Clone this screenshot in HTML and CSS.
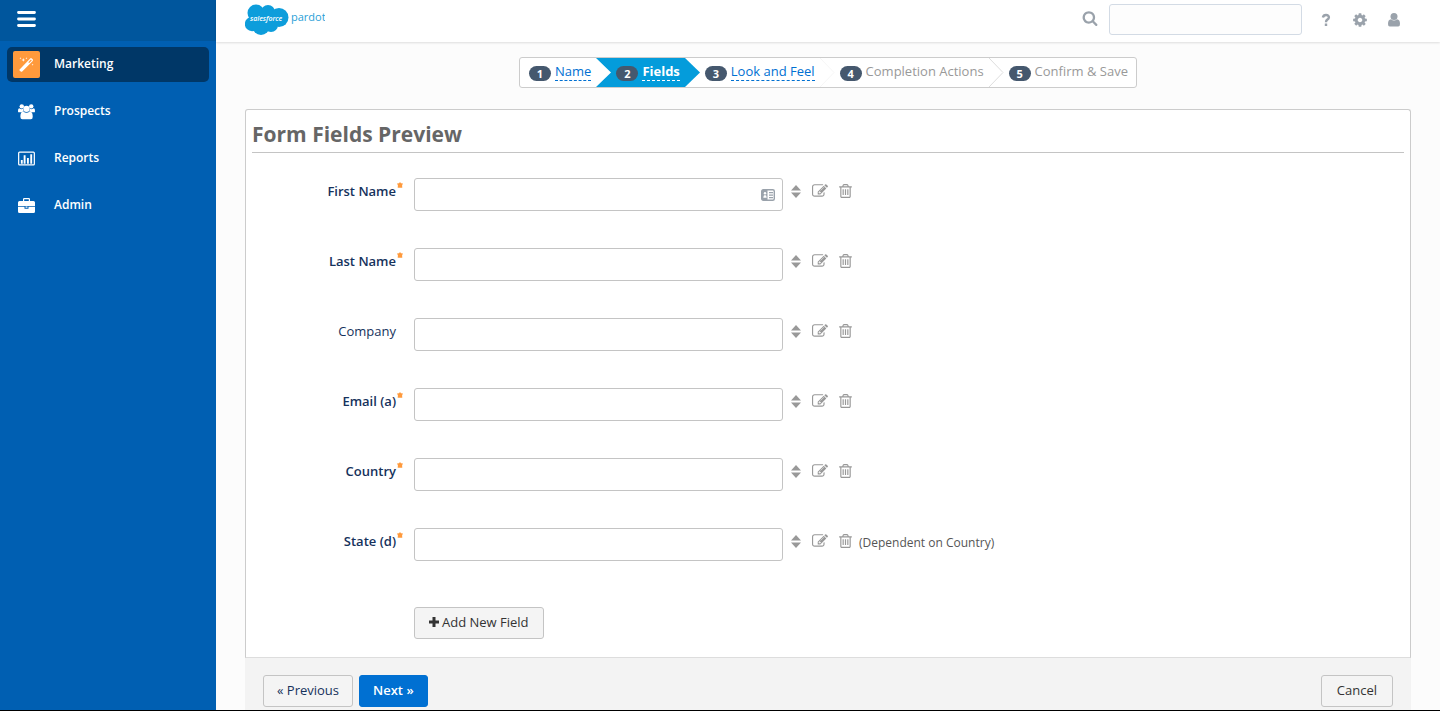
FILE: index.html
```html
<!DOCTYPE html>
<html lang="en">
<head>
    <meta charset="UTF-8">
    <meta name="viewport" content="width=device-width, initial-scale=1.0">
    <title>Form Fields - Pardot</title>
    <link rel="stylesheet" href="styles.css">
</head>
<body>

    <!-- Shared icons -->
    <svg class="sprite" aria-hidden="true">
        <symbol id="icon-sort" viewBox="0 0 10 13">
            <path d="M5 0l5 5.500H0zM5 13l5-5.500H0z"/>
        </symbol>
        <symbol id="icon-edit" viewBox="0 0 1792 1792">
            <path d="M888 1184l116-116-152-152-116 116v56h96v96h56zm440-720q-16-16-33 1l-350 350q-17 17-1 33t33-1l350-350q17-17 1-33zm80 594v190q0 119-84.5 203.5t-203.5 84.5h-832q-119 0-203.5-84.5t-84.5-203.5v-832q0-119 84.5-203.5t203.5-84.5h832q63 0 117 25 15 7 18 23 3 17-9 29l-49 49q-14 14-32 8-23-6-45-6h-832q-66 0-113 47t-47 113v832q0 66 47 113t113 47h832q66 0 113-47t47-113v-126q0-13 9-22l64-64q15-15 35-7t20 29zm-96-738l288 288-672 672h-288v-288zm444 132l-92 92-288-288 92-92q28-28 68-28t68 28l152 152q28 28 28 68t-28 68z"/>
        </symbol>
        <symbol id="icon-trash" viewBox="192 128 1408 1536">
            <path d="M704 736v576q0 14-9 23t-23 9h-64q-14 0-23-9t-9-23v-576q0-14 9-23t23-9h64q14 0 23 9t9 23zm256 0v576q0 14-9 23t-23 9h-64q-14 0-23-9t-9-23v-576q0-14 9-23t23-9h64q14 0 23 9t9 23zm256 0v576q0 14-9 23t-23 9h-64q-14 0-23-9t-9-23v-576q0-14 9-23t23-9h64q14 0 23 9t9 23zm128 724v-948h-896v948q0 22 7 40.5t14.5 27 10.5 8.5h832q3 0 10.5-8.5t14.5-27 7-40.5zm-672-1076h448l-48-117q-7-9-17-11h-317q-10 2-17 11zm928 32v64q0 14-9 23t-23 9h-96v948q0 83-47 143.5t-113 60.5h-832q-66 0-113-58.5t-47-141.5v-952h-96q-14 0-23-9t-9-23v-64q0-14 9-23t23-9h309l70-167q15-37 54-63t79-26h320q40 0 79 26t54 63l70 167h309q14 0 23 9t9 23z"/>
        </symbol>
        <symbol id="icon-star" viewBox="0 0 6 6">
            <path d="M3 0l1 1.300 2 .3-.9 1.700.2 2.500H.7l.2-2.500L0 1.600l2-.3z"/>
        </symbol>
    </svg>

    <!-- Sidebar -->
    <aside class="sidebar">
        <div class="sidebar-top">
            <button type="button" class="menu-btn" aria-label="Toggle menu">
                <svg width="19" height="16" viewBox="0 0 19 16"><path d="M1.500 1.500h16M1.500 8h16M1.500 14.500h16" stroke="#fff" stroke-width="2.800" stroke-linecap="round"/></svg>
            </button>
        </div>
        <nav class="nav">
            <a href="#" class="nav-item active">
                <span class="nav-icon">
                    <svg width="17" height="17" viewBox="0 0 17 17" fill="#fff">
                        <path fill-rule="evenodd" d="M1.600 13.400L12.200 2.400q.8-.7 1.600 0l.9.900q.7.800 0 1.600L4.200 15.400q-.7.700-1.500 0l-1.100-.9q-.6-.6 0-1.100zM10.300 6.200l.9.900 2.600-2.600-.9-.9z"/>
                        <path d="M5.300 2l.5 1.400 1.400.5-1.400.5-.5 1.400-.5-1.400-1.400-.5 1.400-.5zM2.400 1.200l.3.700.7.300-.7.300-.3.700-.3-.7-.7-.3.700-.3zM8.400 1.200l.3.700.7.300-.7.300-.3.700-.3-.7-.7-.3.700-.3zM14.600 7.600l.3.800.8.300-.8.300-.3.800-.3-.8-.8-.3.800-.3z"/>
                    </svg>
                </span>
                <span class="nav-text">Marketing</span>
            </a>
            <a href="#" class="nav-item">
                <span class="nav-icon">
                    <svg width="17" height="17" viewBox="0 0 18 17" fill="#fff">
                        <circle cx="4" cy="3" r="2.300"/>
                        <circle cx="14" cy="3" r="2.300"/>
                        <path d="M0 8.500Q0 5 1.700 5.200q2.200 1.500 3.500.4.100 1.800 1 2.600-1.400.2-2.200 1.200H1.500Q0 9.500 0 8.500zM18 8.500Q18 5 16.300 5.200q-2.200 1.500-3.500.4-.1 1.800-1 2.600 1.400.2 2.200 1.200h2.500q1.500.1 1.500-.9z"/>
                        <circle cx="9" cy="5.700" r="3.400"/>
                        <path d="M5.600 8.600Q9 11.300 12.400 8.600q3.200.2 3.200 5.400 0 2.800-2 2.800H4.600q-2.100 0-2.100-2.800 0-5.200 3.100-5.400z"/>
                    </svg>
                </span>
                <span class="nav-text">Prospects</span>
            </a>
            <a href="#" class="nav-item">
                <span class="nav-icon">
                    <svg width="17" height="15" viewBox="0 0 18 15">
                        <rect x=".7" y=".7" width="16.600" height="13.600" rx="1" fill="none" stroke="#fff" stroke-width="1.300"/>
                        <path d="M3 9h2v4H3zM6 4h2v9H6zM9.500 7h2v6h-2zM13 3h2v10h-2z" fill="#fff"/>
                    </svg>
                </span>
                <span class="nav-text">Reports</span>
            </a>
            <a href="#" class="nav-item">
                <span class="nav-icon">
                    <svg width="17" height="15" viewBox="0 0 17 15" fill="#fff">
                        <path fill-rule="evenodd" d="M5 3V1.200Q5 0 6.200 0h4.600Q12 0 12 1.200V3h3.500Q17 3 17 4.500V8H0V4.500Q0 3 1.500 3zM6.200 3h4.600V1.300H6.200z"/>
                        <path d="M0 8.700h6.500v2h4v-2H17v4.800q0 1.500-1.500 1.500h-14Q0 15 0 13.500zM7.500 8.500h2v1.200h-2z"/>
                    </svg>
                </span>
                <span class="nav-text">Admin</span>
            </a>
        </nav>
    </aside>

    <div class="page">

        <!-- Top bar -->
        <header class="topbar">
            <a href="#" class="logo" aria-label="salesforce pardot">
                <svg width="80" height="32" viewBox="0 0 80 32">
                    <g fill="#0d9ddb">
                        <circle cx="11" cy="9" r="8.500"/>
                        <circle cx="23" cy="8" r="7"/>
                        <circle cx="34" cy="13.500" r="9.500"/>
                        <circle cx="7" cy="20" r="7.200"/>
                        <circle cx="16" cy="22.500" r="8.500"/>
                        <circle cx="26" cy="21" r="7"/>
                        <path d="M8 8h26v14H8z"/>
                    </g>
                    <text x="5" y="17" class="logo-cloud">salesforce</text>
                    <text x="46" y="17" class="logo-name">pardot</text>
                </svg>
            </a>
            <form class="search">
                <label for="search" aria-label="Search">
                    <svg width="16" height="16" viewBox="0 0 1792 1792" fill="#9aa2ab"><path d="M1216 832q0-185-131.500-316.500t-316.500-131.500-316.500 131.500-131.500 316.500 131.500 316.500 316.500 131.500 316.500-131.500 131.500-316.500zm512 832q0 52-38 90t-90 38q-54 0-90-38l-343-342q-179 124-399 124-143 0-273.500-55.500t-225-150-150-225-55.500-273.500 55.500-273.500 150-225 225-150 273.500-55.500 273.500 55.500 225 150 150 225 55.500 273.500q0 220-124 399l343 343q37 37 37 90z"/></svg>
                </label>
                <input type="text" id="search">
            </form>
            <div class="tools">
                <button type="button" aria-label="Help">
                    <svg width="16" height="16" viewBox="0 0 16 16" fill="none" stroke="#9aa2ab" stroke-width="2.400"><path d="M4.900 5.500Q5.400 3 8 3q2.900 0 2.900 2.300 0 1.400-1.600 2.300Q8 8.300 8 10.200M8 11.500v2.500"/></svg>
                </button>
                <button type="button" aria-label="Settings">
                    <svg width="16" height="16" viewBox="0 0 1792 1792" fill="#9aa2ab"><path d="M1152 896q0-106-75-181t-181-75-181 75-75 181 75 181 181 75 181-75 75-181zm512-109v222q0 12-8 23t-20 13l-185 28q-19 54-39 91 35 50 107 138 10 12 10 25t-9 23q-27 37-99 108t-94 71q-12 0-26-9l-138-108q-44 23-91 38-16 136-29 186-7 28-36 28h-222q-14 0-24.500-8.500t-11.500-21.500l-28-184q-49-16-90-37l-141 107q-10 9-25 9-14 0-25-11-126-114-165-168-7-10-7-23 0-12 8-23 15-21 51-66.500t54-70.500q-27-50-41-99l-183-27q-13-2-21-12.500t-8-23.500v-222q0-12 8-23t19-13l186-28q14-46 39-92-40-57-107-138-10-12-10-24 0-10 9-23 26-36 98.500-107.500t94.500-71.500q13 0 26 10l138 107q44-23 91-38 16-136 29-186 7-28 36-28h222q14 0 24.500 8.500t11.500 21.500l28 184q49 16 90 37l142-107q9-9 24-9 13 0 25 10 129 119 165 170 7 8 7 22 0 12-8 23-15 21-51 66.500t-54 70.500q26 50 41 98l183 28q13 2 21 12.500t8 23.500z"/></svg>
                </button>
                <button type="button" aria-label="Account">
                    <svg width="16" height="16" viewBox="0 0 16 16" fill="#9aa2ab"><circle cx="8" cy="4.500" r="3.500"/><path d="M5 7.200q3 2.700 6 0 3 .3 3 4.800 0 2.500-1.800 2.500H3.800Q2 14.500 2 12q0-4.500 3-4.800z"/></svg>
                </button>
            </div>
        </header>

        <main class="content">

            <!-- Wizard steps -->
            <ol class="steps">
                <li class="step first"><span class="badge">1</span><a href="#">Name</a></li>
                <li class="arrow" aria-hidden="true">
                    <svg width="15" height="29" viewBox="0 0 15 29"><path d="M0 0h15v29H0l15-14.500z" fill="#049cdb"/></svg>
                </li>
                <li class="step current"><span class="badge">2</span><a href="#">Fields</a></li>
                <li class="arrow" aria-hidden="true">
                    <svg width="15" height="29" viewBox="0 0 15 29"><path d="M0 0l15 14.500L0 29z" fill="#049cdb"/></svg>
                </li>
                <li class="step"><span class="badge">3</span><a href="#">Look and Feel</a></li>
                <li class="arrow" aria-hidden="true">
                    <svg width="15" height="29" viewBox="0 0 15 29"><path d="M0 0l14 14.500L0 29" fill="none" stroke="#f6f6f6"/></svg>
                </li>
                <li class="step"><span class="badge">4</span><span>Completion Actions</span></li>
                <li class="arrow" aria-hidden="true">
                    <svg width="15" height="29" viewBox="0 0 15 29"><path d="M0 0l14 14.500L0 29" fill="none" stroke="#ddd"/></svg>
                </li>
                <li class="step last"><span class="badge">5</span><span>Confirm &amp; Save</span></li>
            </ol>

            <form class="wizard">
                <section class="card">
                    <h1>Form Fields Preview</h1>

                    <div class="field required">
                        <label for="first_name">First Name<svg class="star"><use href="#icon-star"/></svg></label>
                        <div class="input-wrap">
                            <input type="text" id="first_name">
                            <svg class="autofill" width="14" height="12" viewBox="0 0 14 12"><rect x=".7" y=".7" width="12.600" height="10.600" rx="1.500" fill="#fff" stroke="#9aa2ab" stroke-width="1.400"/><path d="M1 1h5.500v10H1zM8 3h4v1.200H8zM8 5.500h4v1.200H8zM8 8h4v1.200H8z" fill="#9aa2ab"/><circle cx="4" cy="4.300" r="1.200" fill="#fff"/><path d="M2.300 8.800q0-2.800 1.700-2.800t1.700 2.800z" fill="#fff"/></svg>
                        </div>
                        <div class="actions">
                            <button type="button" aria-label="Move First Name"><svg class="sort"><use href="#icon-sort"/></svg></button>
                            <button type="button" aria-label="Edit First Name"><svg class="edit"><use href="#icon-edit"/></svg></button>
                            <button type="button" aria-label="Delete First Name"><svg class="trash"><use href="#icon-trash"/></svg></button>
                        </div>
                    </div>

                    <div class="field required">
                        <label for="last_name">Last Name<svg class="star"><use href="#icon-star"/></svg></label>
                        <div class="input-wrap"><input type="text" id="last_name"></div>
                        <div class="actions">
                            <button type="button" aria-label="Move Last Name"><svg class="sort"><use href="#icon-sort"/></svg></button>
                            <button type="button" aria-label="Edit Last Name"><svg class="edit"><use href="#icon-edit"/></svg></button>
                            <button type="button" aria-label="Delete Last Name"><svg class="trash"><use href="#icon-trash"/></svg></button>
                        </div>
                    </div>

                    <div class="field">
                        <label for="company">Company</label>
                        <div class="input-wrap"><input type="text" id="company"></div>
                        <div class="actions">
                            <button type="button" aria-label="Move Company"><svg class="sort"><use href="#icon-sort"/></svg></button>
                            <button type="button" aria-label="Edit Company"><svg class="edit"><use href="#icon-edit"/></svg></button>
                            <button type="button" aria-label="Delete Company"><svg class="trash"><use href="#icon-trash"/></svg></button>
                        </div>
                    </div>

                    <div class="field required">
                        <label for="email">Email (a)<svg class="star"><use href="#icon-star"/></svg></label>
                        <div class="input-wrap"><input type="text" id="email"></div>
                        <div class="actions">
                            <button type="button" aria-label="Move Email"><svg class="sort"><use href="#icon-sort"/></svg></button>
                            <button type="button" aria-label="Edit Email"><svg class="edit"><use href="#icon-edit"/></svg></button>
                            <button type="button" aria-label="Delete Email"><svg class="trash"><use href="#icon-trash"/></svg></button>
                        </div>
                    </div>

                    <div class="field required">
                        <label for="country">Country<svg class="star"><use href="#icon-star"/></svg></label>
                        <div class="input-wrap"><input type="text" id="country"></div>
                        <div class="actions">
                            <button type="button" aria-label="Move Country"><svg class="sort"><use href="#icon-sort"/></svg></button>
                            <button type="button" aria-label="Edit Country"><svg class="edit"><use href="#icon-edit"/></svg></button>
                            <button type="button" aria-label="Delete Country"><svg class="trash"><use href="#icon-trash"/></svg></button>
                        </div>
                    </div>

                    <div class="field required">
                        <label for="state">State (d)<svg class="star"><use href="#icon-star"/></svg></label>
                        <div class="input-wrap"><input type="text" id="state"></div>
                        <div class="actions">
                            <button type="button" aria-label="Move State"><svg class="sort"><use href="#icon-sort"/></svg></button>
                            <button type="button" aria-label="Edit State"><svg class="edit"><use href="#icon-edit"/></svg></button>
                            <button type="button" aria-label="Delete State"><svg class="trash"><use href="#icon-trash"/></svg></button>
                        </div>
                        <span class="note">(Dependent on Country)</span>
                    </div>

                    <button type="button" class="btn add-btn">
                        <svg width="10" height="10" viewBox="0 0 10 10"><path d="M5 0v10M0 5h10" stroke="#333" stroke-width="3"/></svg>
                        Add New Field
                    </button>
                </section>

                <!-- Wizard buttons -->
                <div class="form-actions">
                    <button type="button" class="btn prev-btn">« Previous</button>
                    <button type="submit" class="btn btn-primary">Next »</button>
                    <button type="button" class="btn cancel-btn">Cancel</button>
                </div>
            </form>
        </main>
    </div>

</body>
</html>
```
FILE: styles.css
```css
/* General Styles */
* {
    box-sizing: border-box;
}

body {
    margin: 0;
    min-height: 100vh;
    display: flex;
    font-family: "Open Sans", "Noto Sans", sans-serif;
    font-size: 13px;
    line-height: 20px;
    color: #333;
    background-color: #fcfcfc;
    border-bottom: 1px solid #000;
}

svg {
    display: block;
    flex-shrink: 0;
}

button {
    padding: 0;
    border: 0;
    background: none;
    font: inherit;
    color: inherit;
    cursor: pointer;
}

.sprite {
    display: none;
}

/* Sidebar */
.sidebar {
    width: 216px;
    flex-shrink: 0;
    background-color: #005fb2;
}

.sidebar-top {
    height: 41px;
    padding: 11px 17px;
    background-color: #00569d;
}

.nav {
    display: flex;
    flex-direction: column;
    gap: 12px;
    padding: 6px 7px;
}

.nav-item {
    display: flex;
    align-items: center;
    gap: 14px;
    height: 35px;
    padding: 0 6px;
    border-radius: 5px;
    color: #fff;
    font-size: 12px;
    font-weight: 600;
    text-decoration: none;
}

.nav-item.active {
    background-color: #003767;
}

.nav-icon {
    display: flex;
    align-items: center;
    justify-content: center;
    width: 27px;
    height: 27px;
    border-radius: 2px;
}

.nav-text {
    padding-bottom: 2px;
}

.active .nav-icon {
    background-color: #ff9a3c;
}

/* Top bar */
.page {
    flex: 1;
    min-width: 0;
    display: flex;
    flex-direction: column;
}

.topbar {
    display: flex;
    align-items: center;
    height: 42px;
    padding: 0 38px 3px 29px;
    background-color: #fff;
    box-shadow: 0 1px 2px rgba(0, 0, 0, 0.12);
}

.logo-cloud {
    font-size: 7px;
    font-style: italic;
    font-weight: 600;
    fill: #fff;
}

.logo-name {
    font-size: 11px;
    fill: #2a9fd8;
}

.search {
    display: flex;
    align-items: center;
    gap: 11px;
    margin-left: auto;
}

.search label {
    padding-bottom: 3px;
}

.search input {
    width: 193px;
    height: 31px;
    border: 1px solid #d3dbe5;
    border-radius: 3px;
    background-color: #fdfdfd;
}

.tools {
    display: flex;
    gap: 18px;
    margin-left: 16px;
}

/* Wizard steps */
.content {
    flex: 1;
    display: flex;
    flex-direction: column;
    align-items: center;
    padding: 15px 29px 0;
}

.steps {
    display: flex;
    margin: 0;
    padding: 0;
    list-style: none;
    border: 1px solid #ccc;
    border-radius: 3px;
    background-color: #fff;
    color: #999;
    overflow: hidden;
}

.step {
    display: flex;
    align-items: flex-start;
    gap: 4px;
    padding: 3px 5px 0;
}

.step.first {
    padding-left: 9px;
}

.step.last {
    padding-right: 8px;
}

.step a {
    height: 20px;
    color: #0070d2;
    text-decoration: none;
    border-bottom: 1px dashed #0070d2;
}

.step.current {
    background-color: #049cdb;
}

.step.current a {
    color: #fff;
    font-weight: 700;
    border-color: #fff;
}

.badge {
    width: 22px;
    height: 15px;
    margin-top: 5px;
    border-radius: 8px;
    background-color: #45586e;
    color: #fff;
    font-size: 11px;
    font-weight: 700;
    line-height: 15px;
    text-align: center;
}

/* Form card */
.wizard {
    flex: 1;
    display: flex;
    flex-direction: column;
    width: 100%;
    margin-top: 21px;
}

.card {
    padding: 10px 6px 18px;
    border: 1px solid #ccc;
    border-bottom-color: #ddd;
    border-radius: 3px 3px 0 0;
    background-color: #fff;
}

h1 {
    margin: 0 0 25px;
    padding-bottom: 4px;
    border-bottom: 1px solid #c4c4c4;
    color: #666;
    font-size: 21px;
    line-height: 28px;
}

.field {
    display: flex;
    align-items: flex-start;
    margin-bottom: 37px;
}

.field label {
    position: relative;
    width: 144px;
    margin-right: 18px;
    padding-top: 3px;
    color: #16325c;
    text-align: right;
}

.required label {
    font-weight: 600;
}

/* Required marker hangs outside the label */
.star {
    position: absolute;
    top: 4px;
    right: -7px;
    width: 6px;
    height: 6px;
    fill: #ff9a3c;
}

.input-wrap {
    position: relative;
    width: 369px;
}

.input-wrap input {
    display: block;
    width: 100%;
    height: 33px;
    padding: 0 10px;
    border: 1px solid #c4c4c4;
    border-radius: 3px;
    background-color: #fff;
    font: inherit;
}

.autofill {
    position: absolute;
    top: 11px;
    right: 8px;
}

.actions {
    display: flex;
    align-items: center;
    gap: 11px;
    height: 26px;
    margin-left: 8px;
    fill: #999;
}

.sort {
    width: 10px;
    height: 13px;
}

.edit {
    width: 16px;
    height: 16px;
}

.trash {
    width: 13px;
    height: 14px;
}

.note {
    margin: 5px 0 0 7px;
    color: #555;
    font-size: 12px;
}

/* Buttons */
.btn {
    height: 32px;
    padding: 0 15px 2px;
    border: 1px solid #c4c4c4;
    border-radius: 3px;
    background-color: #f4f4f4;
    white-space: nowrap;
}

.add-btn {
    display: flex;
    align-items: center;
    gap: 3px;
    margin: 46px 0 0 162px;
    padding: 0 14px 2px;
}

.form-actions {
    flex: 1;
    display: flex;
    align-items: flex-start;
    gap: 6px;
    padding: 17px 18px 3px;
    background-color: #f3f3f3;
}

.prev-btn,
.btn-primary {
    padding: 0 13px 2px;
}

.prev-btn {
    color: #16325c;
}

.btn-primary {
    border-color: #0070d2;
    background-color: #0070d2;
    color: #fff;
    font-weight: 600;
}

.cancel-btn {
    margin-left: auto;
}
```
